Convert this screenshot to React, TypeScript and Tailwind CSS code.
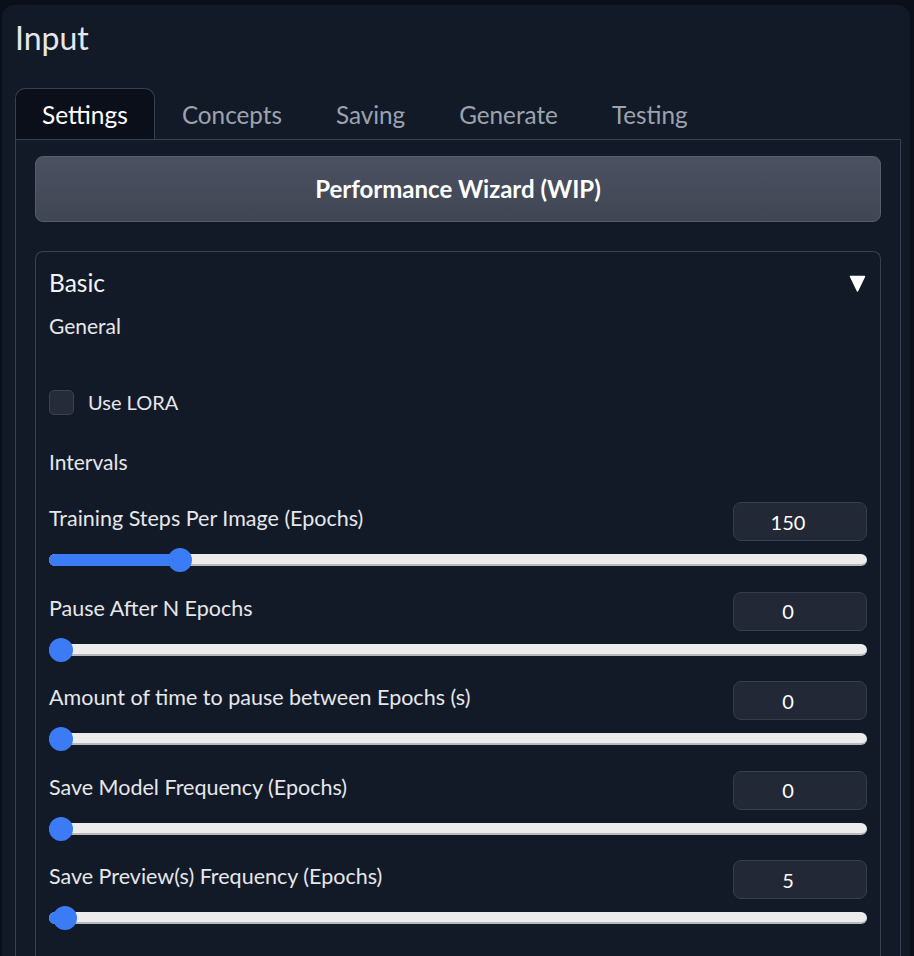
import type { ReactNode } from 'react';

const font = { fontFamily: 'Lato, "Noto Sans", sans-serif' };

type Row = { label: string; value: number; max: number };

const rows: Row[] = [
  { label: 'Training Steps Per Image (Epochs)', value: 150, max: 1000 },
  { label: 'Pause After N Epochs', value: 0, max: 100 },
  { label: 'Amount of time to pause between Epochs (s)', value: 0, max: 100 },
  { label: 'Save Model Frequency (Epochs)', value: 0, max: 100 },
  { label: 'Save Preview(s) Frequency (Epochs)', value: 5, max: 1000 },
];

function Slider({ label, value, max }: Row) {
  const pct = value / max;
  return (
    <div className="pb-[19.5px]">
      <div className="flex items-center justify-between">
        <span className="-mt-[7px] text-[21.5px] leading-[28px] text-[#e5e7eb]">{label}</span>
        <div className="flex h-[39px] w-[134px] items-center justify-center rounded-[8px] border border-[#363d4b] bg-[#222836] pr-[24px] text-[20px] text-white">
          {value}
        </div>
      </div>
      <div className="relative mt-[7px] h-[24px]">
        <div className="absolute left-0 right-0 top-[6px] h-[12px] rounded-full border-b-2 border-[#b9b9b9] bg-[#ececec]" />
        <div
          className="absolute left-0 top-[6px] h-[12px] rounded-full bg-[#3b7cf6]"
          style={{ width: `calc(12px + (100% - 24px) * ${pct})` }}
        />
        <div
          className="absolute top-0 h-[24px] w-[24px] rounded-full bg-[#3b7cf6]"
          style={{ left: `calc((100% - 24px) * ${pct})` }}
        />
      </div>
    </div>
  );
}

function Tab({ children, active }: { children: ReactNode; active?: boolean }) {
  return active ? (
    <div className="-mb-px flex h-[51px] items-center rounded-t-[10px] border border-b-0 border-[#374151] bg-[#0b0f19] px-[26px] pt-[3px] text-[24.5px] text-white">
      {children}
    </div>
  ) : (
    <div className="flex h-[51px] items-center px-[27px] pt-[3px] text-[24.25px] text-[#9ca3af]">{children}</div>
  );
}

export default function App() {
  return (
    <div className="h-[956px] overflow-hidden bg-[#0b0f19] pl-[2px] pr-[4px] pt-[5px]" style={font}>
      <div className="h-full rounded-t-[12px] bg-[#131a27] pl-[13px] pr-[9px] pt-[12px]">
        <h1 className="text-[32px] leading-[42px] text-[#e5e7eb]">Input</h1>
        <div className="mt-[29px] flex border-b border-[#374151]">
          <Tab active>Settings</Tab>
          <Tab>Concepts</Tab>
          <Tab>Saving</Tab>
          <Tab>Generate</Tab>
          <Tab>Testing</Tab>
        </div>
        <div className="h-full border-x border-[#374151] px-[19px] pt-[16px]">
          <button className="flex h-[66px] w-full items-center justify-center rounded-[8px] border border-[#565c6b] bg-gradient-to-b from-[#4b5161] to-[#414654] text-[24px] font-bold text-white">
            Performance Wizard (WIP)
          </button>
          <div className="mt-[29px] h-full rounded-t-[8px] border border-b-0 border-[#374151] px-[13px] pt-[14px]">
            <div className="flex items-center justify-between">
              <span className="text-[24.5px] leading-[34px] text-[#f3f4f6]">Basic</span>
              <svg width="17" height="17" viewBox="0 0 17 17" className="mr-[1px]">
                <path d="M1.5 1.5 H15.5 L8.5 16 Z" fill="#fff" stroke="#fff" strokeWidth="1.5" strokeLinejoin="round" />
              </svg>
            </div>
            <div className="mt-[12px] text-[21px] leading-[28px] text-[#e5e7eb]">General</div>
            <label className="mt-[47px] flex items-center gap-[14px]">
              <span className="h-[25px] w-[25px] rounded-[5px] border border-[#3a4150] bg-[#252b39]" />
              <span className="text-[20px] text-[#e5e7eb]">Use LORA</span>
            </label>
            <div className="mt-[31px] text-[21px] leading-[28px] text-[#e5e7eb]">Intervals</div>
            <div className="mt-[26px]">
              {rows.map((r) => (
                <Slider key={r.label} {...r} />
              ))}
            </div>
          </div>
        </div>
      </div>
    </div>
  );
}
